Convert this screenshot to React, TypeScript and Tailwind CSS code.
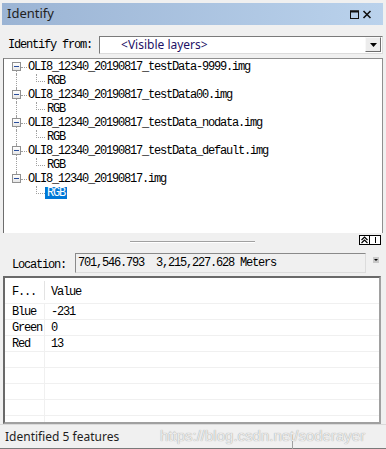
import React from 'react';

const mono = "font-['Liberation_Mono',monospace] text-[12px] tracking-[-1.2px] text-black";
const dot = 'border-dotted border-[#a0a0a0]';

const files = [
  'OLI8_12340_20190817_testData-9999.img',
  'OLI8_12340_20190817_testData00.img',
  'OLI8_12340_20190817_testData_nodata.img',
  'OLI8_12340_20190817_testData_default.img',
  'OLI8_12340_20190817.img',
];

const MinusBox = () => (
  <div className="flex h-[9px] w-[9px] shrink-0 items-center justify-center border border-[#919191] bg-gradient-to-b from-white to-[#e6e6e6]">
    <div className="h-px w-[5px] bg-[#2a4e9c]" />
  </div>
);

const TreeGroup = ({ name, first, last }: { name: string; first: boolean; last: boolean }) => (
  <>
    <div className="flex h-[14px] items-center">
      <div className="w-[8px]" />
      <div className="flex h-full w-[9px] flex-col items-center">
        <div className={`h-[2px] w-0 ${first ? '' : `border-l ${dot}`}`} />
        <MinusBox />
        <div className={`h-[3px] w-0 ${last ? '' : `border-l ${dot}`}`} />
      </div>
      <div className={`w-[6px] border-t ${dot}`} />
      <span className={`ml-px leading-[14px] ${mono}`}>{name}</span>
    </div>
    <div className="flex h-[14px]">
      <div className="w-[8px]" />
      <div className="flex h-full w-[9px] justify-center">
        <div className={`h-full w-0 ${last ? '' : `border-l ${dot}`}`} />
      </div>
      <div className="w-[15px]" />
      <div className={`h-[8px] w-[9px] border-b border-l ${dot}`} />
      <div className="flex h-full items-center">
        {last ? (
          <span className={`h-[12px] bg-[#0078d7] px-[2px] leading-[12px] ${mono} text-white`}>RGB</span>
        ) : (
          <span className={`px-[2px] leading-[14px] ${mono}`}>RGB</span>
        )}
      </div>
    </div>
  </>
);

const rows = [
  ['Blue', '-231'],
  ['Green', '0'],
  ['Red', '13'],
  ['', ''],
  ['', ''],
  ['', ''],
  ['', ''],
  ['', ''],
];

export default function App() {
  return (
    <div className="relative flex h-[449px] w-[386px] flex-col overflow-hidden bg-[#f0f0f0] pl-[2px] pr-[3px] pt-[3px]">
      {/* title bar */}
      <div className="flex h-[22px] shrink-0 items-center bg-gradient-to-r from-[#9bb4d4] to-[#bad2ec] pl-[5px] pr-[11px]">
        <span className="font-['Noto_Sans',sans-serif] text-[13px] text-[#222]">Identify</span>
        <div className="ml-auto flex items-center gap-[2px]">
          <svg width="9" height="9" viewBox="0 0 9 9">
            <rect x="0.5" y="1" width="8" height="7.5" fill="none" stroke="#111" strokeWidth="1" />
            <rect x="0" y="0.5" width="9" height="2" fill="#111" />
          </svg>
          <svg width="10" height="9" viewBox="0 0 10 9" className="ml-[1px]">
            <path d="M1.5 1 L8.5 8 M8.5 1 L1.5 8" stroke="#111" strokeWidth="1.6" />
          </svg>
        </div>
      </div>

      {/* identify from */}
      <div className="flex h-[33px] shrink-0 items-center pl-[6px] pt-[6px]">
        <span className={mono}>Identify from:</span>
        <div className="ml-[7px] flex h-[18px] w-[284px] items-center border border-[#7a7a7a] border-b-[#dcdcdc] border-r-[#dcdcdc] bg-white">
          <span className="ml-[21px] font-['Noto_Sans',sans-serif] text-[12px] leading-none text-[#1c1166]">&lt;Visible layers&gt;</span>
          <div className="ml-auto mr-px flex h-[15px] w-[16px] items-center justify-center border border-[#f8f8f8] border-b-[#6e6e6e] border-r-[#6e6e6e] bg-[#ececec]">
            <svg width="7" height="4" viewBox="0 0 7 4">
              <path d="M0 0 H7 L3.5 4 Z" fill="#000" />
            </svg>
          </div>
        </div>
      </div>

      {/* tree */}
      <div className="ml-px flex h-[175px] shrink-0 flex-col border-l border-r border-t border-[#8f8f8f] border-l-[#6d6d6d] bg-white pt-[1px]">
        {files.map((f, i) => (
          <TreeGroup key={f} name={f} first={i === 0} last={i === files.length - 1} />
        ))}
      </div>

      {/* splitter */}
      <div className="relative flex h-[16px] shrink-0 items-center justify-center">
        <div className="mt-[1px] h-[2px] w-[125px] border-b border-t border-b-white border-t-[#a0a0a0]" />
        <div className="absolute right-[2px] top-[2px] flex">
          <div className="flex h-[10px] w-[11px] items-center justify-center border border-black bg-white">
            <svg width="7" height="8" viewBox="0 0 7 8">
              <path d="M0.5 4 L3.5 1 L6.5 4 M0.5 7 L3.5 4 L6.5 7" stroke="#000" strokeWidth="1.2" fill="none" />
            </svg>
          </div>
          <div className="flex h-[10px] w-[11px] items-center justify-center border border-l-0 border-black bg-white">
            <div className="h-[6px] w-px bg-black" />
          </div>
        </div>
      </div>

      {/* location */}
      <div className="flex h-[27px] shrink-0 items-start pl-[10px] pt-[4px]">
        <span className={`mt-[3px] ${mono}`}>Location:</span>
        <div className="ml-[9px] flex h-[20px] w-[291px] items-center border border-[#8a8a8a] border-b-[#dcdcdc] border-r-[#dcdcdc] pl-[2px]">
          <span className={`whitespace-pre ${mono}`}>701,546.793  3,215,227.628 Meters</span>
        </div>
        <div className="ml-[7px] mt-[4px] flex h-[6px] w-[6px] items-center justify-center bg-[#c8c8c8]">
          <svg width="4" height="2" viewBox="0 0 4 2">
            <path d="M0 0 H4 L2 2 Z" fill="#000" />
          </svg>
        </div>
      </div>

      {/* table */}
      <div className="ml-px flex h-[148px] w-[378px] shrink-0 flex-col overflow-hidden border-2 border-[#a0a0a0] border-l-[#696969] border-t-[#696969] bg-white">
        <div className="flex h-[25px] shrink-0">
          <div className={`flex w-[39px] items-center pl-[7px] pt-[2px] ${mono}`}>F...</div>
          <div className="my-[3px] w-px bg-[#e3e3e3]" />
          <div className={`flex items-center pl-[6px] pt-[2px] ${mono}`}>Value</div>
        </div>
        {rows.map((r, i) => (
          <div key={i} className="flex h-[16px] shrink-0 border-t border-[#f0f0f0]">
            <div className={`flex w-[39px] items-center pl-[7px] ${mono}`}>{r[0]}</div>
            <div className="w-px bg-[#f0f0f0]" />
            <div className={`flex items-center pl-[6px] ${mono}`}>{r[1]}</div>
          </div>
        ))}
      </div>

      {/* status bar */}
      <div className="-ml-[2px] -mr-[3px] flex h-[25px] shrink-0 items-center border-b border-t border-b-[#7a7a7a] border-t-[#dadada] pl-[5px]">
        <span className="font-['Noto_Sans',sans-serif] text-[12px] text-[#1e1e1e]">Identified 5 features</span>
        <div className="ml-auto mr-[93px] mt-[10px] h-[14px] w-px bg-[#a0a0a0]" />
      </div>

      <span className="pointer-events-none absolute left-[160px] top-[425px] font-['Liberation_Sans',sans-serif] text-[15px] text-[#ececec] [text-shadow:0_0_1px_#8a8a8a]">
        https://blog.csdn.net/soderayer
      </span>
    </div>
  );
}
